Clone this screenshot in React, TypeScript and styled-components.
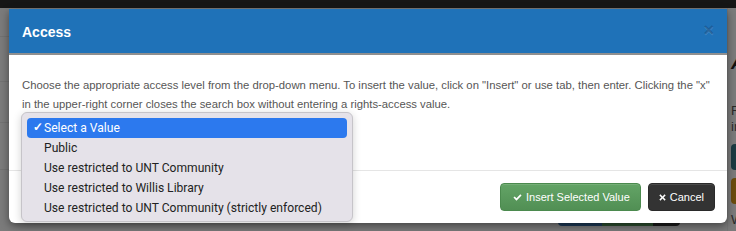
import React from 'react'
import styled, { createGlobalStyle } from 'styled-components'

const GlobalStyle = createGlobalStyle`
  html, body {
    margin: 0;
    padding: 0;
    background: #7b7b7b;
  }
  * {
    box-sizing: border-box;
  }
`

type Option = {
  label: string
  selected?: boolean
}

const options: Option[] = [
  { label: 'Select a Value', selected: true },
  { label: 'Public' },
  { label: 'Use restricted to UNT Community' },
  { label: 'Use restricted to Willis Library' },
  { label: 'Use restricted to UNT Community (strictly enforced)' },
]

const CheckIcon = ({ size = 10 }: { size?: number }) => (
  <svg width={size} height={size} viewBox="0 0 16 16" fill="currentColor" aria-hidden>
    <path d="M6.2 13.6 0.8 8.2l2.2-2.2 3.2 3.2 6.8-6.8 2.2 2.2z" />
  </svg>
)

const RemoveIcon = ({ size = 9 }: { size?: number }) => (
  <svg width={size} height={size} viewBox="0 0 16 16" fill="currentColor" aria-hidden>
    <path d="M3.2 0.8 8 5.6l4.8-4.8 2.4 2.4L10.4 8l4.8 4.8-2.4 2.4L8 10.4l-4.8 4.8-2.4-2.4L5.6 8 0.8 3.2z" />
  </svg>
)

export default function App() {
  return (
    <Page>
      <GlobalStyle />
      <TopBar />
      <Behind>
        <LeftStrip>
          <StripRow h={29} />
          <StripRow h={45} />
          <StripRow h={41} />
          <StripRow h={47} />
        </LeftStrip>
        <Center>
          <PeekGroup>
            <PeekButton tone="#1d3a58" w={44} />
            <PeekButton tone="#2c4f2f" w={51} />
            <PeekButton tone="#1b1b1b" w={27} />
          </PeekGroup>
        </Center>
        <RightStrip>
          <BigLetter>A</BigLetter>
          <SmallText mt={31}>R</SmallText>
          <SmallText mt={2}>in</SmallText>
          <Block tone="#1c3a42" mt={10} />
          <Block tone="#6a4c0d" mt={8} />
          <SmallText mt={9}>W</SmallText>
        </RightStrip>
      </Behind>

      <Modal>
        <Header>
          <Title>Access</Title>
          <Close>×</Close>
        </Header>
        <Body>
          <Intro>
            Choose the appropriate access level from the drop-down menu. To insert the value, click on "Insert" or use
            tab, then enter. Clicking the "x" in the upper-right corner closes the search box without entering a
            rights-access value.
          </Intro>
        </Body>
        <Footer>
          <Button variant="success">
            <IconSlot offset={2}>
              <CheckIcon size={9} />
            </IconSlot>
            Insert Selected Value
          </Button>
          <Button variant="dark">
            <IconSlot offset={0}>
              <RemoveIcon size={7} />
            </IconSlot>
            Cancel
          </Button>
        </Footer>

        <Menu>
          {options.map((o) => (
            <MenuItem key={o.label} selected={!!o.selected}>
              {o.selected && <Tick>✓</Tick>}
              {o.label}
            </MenuItem>
          ))}
        </Menu>
      </Modal>
    </Page>
  )
}

const Page = styled.div`
  position: relative;
  width: 736px;
  height: 231px;
  overflow: hidden;
  background: #7b7b7b;
  display: flex;
  flex-direction: column;
  font-family: 'Liberation Sans', Arial, sans-serif;
`

const TopBar = styled.div`
  height: 8px;
  background: #161616;
  flex-shrink: 0;
`

const Behind = styled.div`
  flex: 1;
  display: flex;
`

const LeftStrip = styled.div`
  width: 9px;
  display: flex;
  flex-direction: column;
`

const StripRow = styled.div<{ h: number }>`
  height: ${(p) => p.h}px;
  border-bottom: 1px solid #727272;
`

const Center = styled.div`
  flex: 1;
  display: flex;
  flex-direction: column;
  justify-content: flex-end;
  padding-bottom: 5px;
`

const PeekGroup = styled.div`
  display: flex;
  margin-left: 549px;
`

const PeekButton = styled.div<{ tone: string; w: number }>`
  width: ${(p) => p.w}px;
  height: 30px;
  background: ${(p) => p.tone};
  &:first-child {
    border-radius: 0 0 0 4px;
  }
  &:last-child {
    border-radius: 0 0 4px 0;
  }
`

const RightStrip = styled.div`
  width: 9px;
  padding-left: 3px;
  border-left: 1px solid #757575;
  display: flex;
  flex-direction: column;
  overflow: hidden;
`

const BigLetter = styled.div`
  margin-top: 45px;
  font-size: 19px;
  font-weight: 700;
  font-style: italic;
  line-height: 20px;
  color: #111;
`

const SmallText = styled.div<{ mt: number }>`
  margin-top: ${(p) => p.mt}px;
  font-size: 13px;
  line-height: 14px;
  color: #2a2a2a;
  white-space: nowrap;
`

const Block = styled.div<{ tone: string; mt: number }>`
  margin-top: ${(p) => p.mt}px;
  width: 20px;
  height: 26px;
  border-radius: 4px 0 0 4px;
  background: ${(p) => p.tone};
  flex-shrink: 0;
`

const Modal = styled.div`
  position: absolute;
  top: 9px;
  left: 9px;
  width: 718px;
  height: 214px;
  background: #fff;
  border-radius: 0 0 6px 6px;
  box-shadow: 0 3px 9px rgba(0, 0, 0, 0.45);
  display: flex;
  flex-direction: column;
`

const Header = styled.div`
  height: 46px;
  padding: 0 13px;
  background: #1f72b8;
  border-bottom: 2px solid #8f8f8f;
  display: flex;
  align-items: center;
  justify-content: space-between;
  flex-shrink: 0;
`

const Title = styled.h4`
  margin: 1px 0 0;
  font-size: 14px;
  font-weight: 700;
  color: #fff;
`

const Close = styled.span`
  font-size: 18px;
  font-weight: 700;
  line-height: 1;
  color: rgba(0, 30, 70, 0.28);
  text-shadow: 0 1px 0 rgba(255, 255, 255, 0.15);
  margin-top: -3px;
  margin-right: 0;
`

const Body = styled.div`
  flex: 1;
  padding: 21px 13px 0;
`

const Intro = styled.p`
  margin: 0;
  font-size: 11.3px;
  line-height: 19px;
  color: #565656;
`

const Footer = styled.div`
  height: 53px;
  border-top: 1px solid #e5e5e5;
  padding: 12px 12px 0;
  display: flex;
  justify-content: flex-end;
  gap: 7px;
  flex-shrink: 0;
`

const Button = styled.button<{ variant: 'success' | 'dark' }>`
  height: 28px;
  padding: 0 10px;
  display: flex;
  align-items: center;
  gap: 4px;
  font-family: 'Liberation Sans', Arial, sans-serif;
  font-size: 11px;
  color: #fff;
  border-radius: 4px;
  cursor: pointer;
  border: 1px solid ${(p) => (p.variant === 'success' ? '#4b8a4e' : '#2a2a2a')};
  background: ${(p) =>
    p.variant === 'success' ? 'linear-gradient(#63a466, #518f54)' : '#333333'};
  box-shadow: inset 0 1px 0 rgba(255, 255, 255, 0.12);
`

const IconSlot = styled.span<{ offset: number }>`
  display: flex;
  margin-left: ${(p) => p.offset}px;
`

const Menu = styled.div`
  position: absolute;
  top: 103px;
  left: 12px;
  width: 332px;
  height: 110px;
  padding: 5px 5px 0;
  background: #e5e2e9;
  border: 1px solid #c6c4c9;
  border-radius: 6px;
  box-shadow: 0 2px 8px rgba(0, 0, 0, 0.18);
  display: flex;
  flex-direction: column;
`

const MenuItem = styled.div<{ selected: boolean }>`
  position: relative;
  height: 20px;
  padding-left: 17px;
  display: flex;
  align-items: center;
  font-family: Roboto, 'Liberation Sans', sans-serif;
  font-size: 12.1px;
  color: ${(p) => (p.selected ? '#fff' : '#222')};
  background: ${(p) => (p.selected ? '#2c79ee' : 'transparent')};
  border-radius: 4px;
  white-space: nowrap;
`

const Tick = styled.span`
  position: absolute;
  left: 6px;
  top: 2px;
  font-size: 12px;
  font-weight: 700;
`
